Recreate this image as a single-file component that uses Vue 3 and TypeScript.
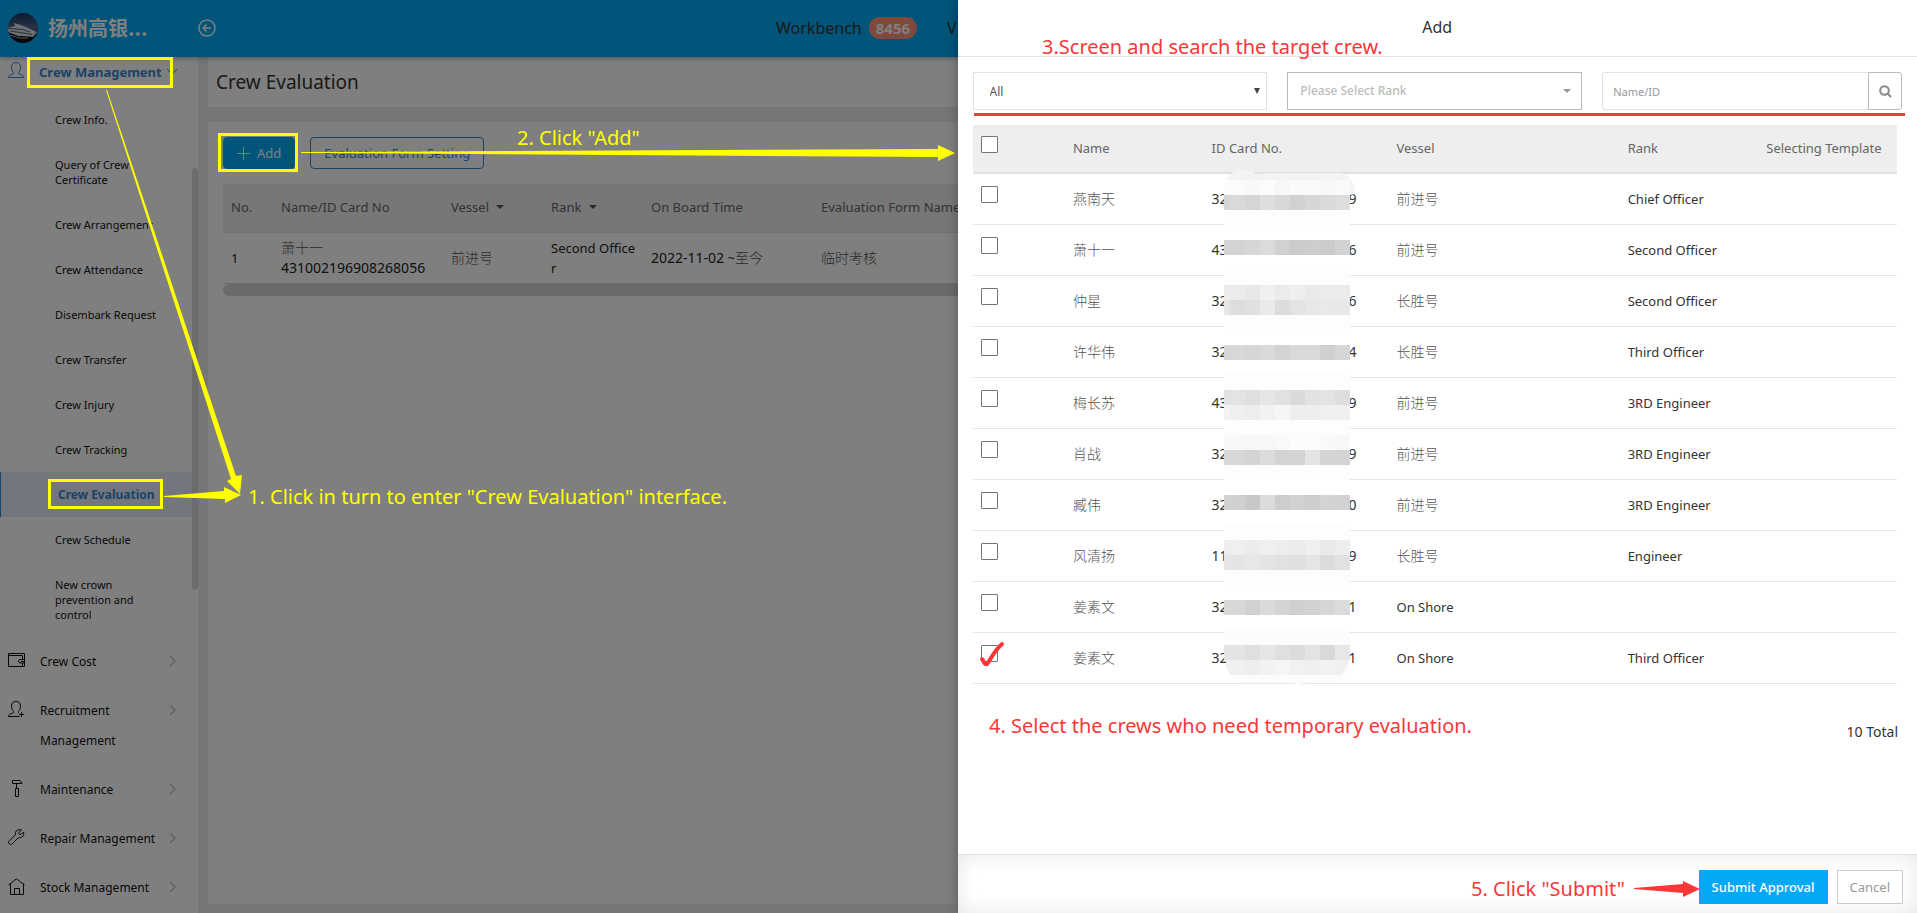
<script setup lang="ts">
import { ref } from 'vue'

interface Band { y: number; shades: string[]; round?: boolean }
interface Crew {
  name: string
  head: string
  tail: string
  vessel: string
  rank: string
  bands: Band[]
}

const subItems = [
  'Crew Info.', 'Query of Crew Certificate', 'Crew Arrangement', 'Crew Attendance',
  'Disembark Request', 'Crew Transfer', 'Crew Injury', 'Crew Tracking',
  'Crew Evaluation', 'Crew Schedule', 'New crown prevention and control'
]
const activeItem = 'Crew Evaluation'

const menuItems = [
  { label: 'Crew Cost', icon: 'wallet' },
  { label: 'Recruitment Management', icon: 'recruit' },
  { label: 'Maintenance', icon: 'hammer' },
  { label: 'Repair Management', icon: 'wrench' },
  { label: 'Stock Management', icon: 'house' }
]

const row = (s: string) => s.split(' ').map((c) => '#' + c + c + c)
const flat = (c: string) => Array<string>(9).fill('#' + c + c + c)

const crews: Crew[] = [
  { name: '燕南天', head: '32', tail: '9', vessel: '前进号', rank: 'Chief Officer', bands: [
    { y: 6, shades: row('fc fb f8 fb f7 fa fa f7 f9') }, { y: 21, shades: row('d5 d9 d5 de d8 d1 d6 da dd') }, { y: 36, shades: flat('fd') }] },
  { name: '萧十一', head: '43', tail: '6', vessel: '前进号', rank: 'Second Officer', bands: [
    { y: 15, shades: row('d3 d3 d6 db d1 cb cd cb d2') }, { y: 45, shades: flat('fd') }] },
  { name: '仲星', head: '32', tail: '6', vessel: '长胜号', rank: 'Second Officer', bands: [
    { y: 9, shades: row('ec ec e8 f0 eb ee ea ec ec') }, { y: 24, shades: row('e5 dd e0 ea dc e3 e7 e9 e8') }, { y: 39, shades: flat('fd') }] },
  { name: '许华伟', head: '32', tail: '4', vessel: '长胜号', rank: 'Third Officer', bands: [
    { y: 18, shades: row('d6 d8 d6 da d3 d9 d9 d0 d6') }, { y: 45, shades: flat('fd') }] },
  { name: '梅长苏', head: '43', tail: '9', vessel: '前进号', rank: '3RD Engineer', bands: [
    { y: 12, shades: row('e1 e3 df e6 e1 da e2 e3 de') }, { y: 27, shades: row('f2 ef ed f2 f6 ee ee ef f0') }, { y: 42, shades: flat('fd') }] },
  { name: '肖战', head: '32', tail: '9', vessel: '前进号', rank: '3RD Engineer', bands: [
    { y: 6, shades: row('f8 f8 f7 f7 f9 fc fc f9 f7') }, { y: 21, shades: row('d9 d7 d4 dc d3 d3 e4 d4 d4') }, { y: 36, shades: flat('fd') }] },
  { name: '臧伟', head: '32', tail: '0', vessel: '前进号', rank: '3RD Engineer', bands: [
    { y: 15, shades: row('d2 d0 c8 dc cd d1 ce d3 d2') }, { y: 45, shades: flat('fd') }] },
  { name: '风清扬', head: '11', tail: '9', vessel: '长胜号', rank: 'Engineer', bands: [
    { y: 9, shades: row('ee ef ec ef ed eb ef ea ed') }, { y: 24, shades: row('e6 e4 e7 e4 e1 df e5 db e1') }, { y: 39, shades: flat('fd') }] },
  { name: '姜素文', head: '32', tail: '1', vessel: 'On Shore', rank: '', bands: [
    { y: 18, shades: row('d9 d8 d1 da d4 cf d2 d6 db') }, { y: 48, shades: flat('fd') }] },
  { name: '姜素文', head: '32', tail: '1', vessel: 'On Shore', rank: 'Third Officer', bands: [
    { y: 12, shades: row('e5 e4 df e6 df dc e3 d9 e7') }, { y: 27, shades: row('f0 f0 ee f2 f5 f1 ef f2 f0'), round: true }] }
]

const scope = ref('All')
const rank = ref('Please Select Rank')
const keyword = ref('')
const picked = ref<number[]>([])
</script>

<template>
  <div class="page">
    <header class="topbar">
      <svg class="logo" viewBox="0 0 30 30" aria-hidden="true">
        <defs>
          <clipPath id="logoClip"><circle cx="15" cy="15" r="15" /></clipPath>
          <linearGradient id="logoSky" x1="0" y1="0" x2="0" y2="1">
            <stop offset="0" stop-color="#1c355f" />
            <stop offset="0.5" stop-color="#4c6790" />
            <stop offset="0.72" stop-color="#20283c" />
            <stop offset="1" stop-color="#07090f" />
          </linearGradient>
        </defs>
        <g clip-path="url(#logoClip)">
          <rect width="30" height="30" fill="url(#logoSky)" />
          <path d="M0 15 L7 13 L6 10 L13 12 L18 14 L29 19 L25 24 L10 23 L0 19Z" fill="#d9dce2" />
          <path d="M0 15.500L15 16.500L22 19M2 18L15 20L24 21.500" fill="none" stroke="#54617a" stroke-width="1" />
          <path d="M0 20L10 23L25 24L21 30H6Z" fill="#0d1018" />
          <path d="M1 22L12 25L20 25" fill="none" stroke="#a9adb5" stroke-width="1" />
        </g>
      </svg>
      <strong class="brand">扬州高银...</strong>
      <button class="back" type="button" aria-label="Collapse menu">
        <svg viewBox="0 0 18 18"><circle cx="9" cy="9" r="8" /><path d="M13 9H5M8.500 5.500L5 9L8.500 12.500" /></svg>
      </button>
      <nav class="topnav">
        <a href="#workbench">Workbench <span class="count">8456</span></a>
        <a href="#v">V</a>
      </nav>
    </header>

    <div class="body">
      <aside class="sidebar">
        <a class="menu current" href="#crew">
          <svg class="mi" viewBox="0 0 16 16"><path d="M5.500 10.500C4 9 3.500 7 3.500 5C3.500 2 5.500.5 8 .5S12.500 2 12.500 5C12.500 7 12 9 10.500 10.500C10 12 11 12 13.500 13C15 13.500 15.500 14 15.500 15.500H.5C.5 14 1 13.500 2.500 13C5 12 6 12 5.500 10.500Z" /></svg>
          <span>Crew Management</span>
          <svg class="down" viewBox="0 0 12 7"><path d="M1 1L6 6L11 1" /></svg>
        </a>
        <a v-for="item in subItems" :key="item" class="sub" :class="{ active: item === activeItem }" href="#sub">{{ item }}</a>
        <a v-for="item in menuItems" :key="item.label" class="menu" href="#menu">
          <svg class="mi" viewBox="0 0 17 17">
            <template v-if="item.icon === 'wallet'">
              <path d="M.5 1.500H16.500V14.500H.5ZM1 3.500H14.500V7.500M14.500 11V14.500M16.500 7.500H11.500L10.500 9L11.500 11H16.500M13 9.500H16" />
            </template>
            <template v-else-if="item.icon === 'recruit'">
              <path d="M10.500 12C10.500 11 10 11 10.500 10.500C12 9 12.500 7 12.500 5C12.500 2 10.500.5 8 .5S3.500 2 3.500 5C3.500 7 4 9 5.500 10.500C6 12 5 12 2.500 13C1 13.500.5 14 .5 15.500H11.500M13.500 11V16M11 13.500H16" />
            </template>
            <template v-else-if="item.icon === 'hammer'">
              <path d="M4.500.5H12L14 3.500H4.500ZM8.500 3.500V8M7.500 8.500H10.500V16.500H7.500Z" />
            </template>
            <template v-else-if="item.icon === 'wrench'">
              <path d="M13.500 1C11 0 8 1 7.500 3.500C7.300 4.500 7.500 5.500 7.300 6L1.200 12C-.5 14 2 16.800 4 15L10 9C11 8.800 12.500 9 14 8C15.800 6.800 16 4.500 15.500 3L13 5.500L11 5L10.800 3.500Z" />
            </template>
            <template v-else>
              <path d="M.5 7L8.500.8L16.500 7M2.500 5.500V16.500H15.500V5.500M6.500 16.500V10.500H11.500V16.500" />
            </template>
          </svg>
          <span>{{ item.label }}</span>
          <svg class="right" viewBox="0 0 7 12"><path d="M1 1L6 6L1 11" /></svg>
        </a>
        <i class="thumb"></i>
      </aside>

      <main class="content">
        <section class="titlebar"><h1>Crew Evaluation</h1></section>
        <section class="panel">
          <div class="actions">
            <button class="add" type="button">
              <svg viewBox="0 0 13 13"><path d="M6.500 0V13M0 6.500H13" /></svg>Add
            </button>
            <button class="outline" type="button">Evaluation Form Setting</button>
          </div>
          <div class="scroller">
            <table class="evals">
              <colgroup><col class="c50" /><col class="c170" /><col class="c100" /><col class="c100" /><col class="c170" /><col /></colgroup>
              <thead>
                <tr>
                  <th>No.</th>
                  <th>Name/ID Card No</th>
                  <th>Vessel <i class="caret"></i></th>
                  <th>Rank <i class="caret"></i></th>
                  <th>On Board Time</th>
                  <th>Evaluation Form Name</th>
                </tr>
              </thead>
              <tbody>
                <tr>
                  <td>1</td>
                  <td><span class="han">萧十一</span><br /><span class="num">431002196908268056</span></td>
                  <td class="han">前进号</td>
                  <td class="break">Second Officer</td>
                  <td><span class="num">2022-11-02</span> ~<span class="han">至今</span></td>
                  <td class="han">临时考核</td>
                </tr>
              </tbody>
            </table>
            <div class="hbar"></div>
          </div>
        </section>
      </main>
    </div>

    <div class="mask"></div>

    <section class="drawer" role="dialog" aria-label="Add">
      <header class="drawer-head"><h2>Add</h2></header>
      <div class="filters">
        <div class="pick light">
          <select v-model="scope" aria-label="Scope"><option>All</option></select>
          <svg viewBox="0 0 6 6"><path d="M0 0H6L3 6Z" /></svg>
        </div>
        <div class="pick">
          <select v-model="rank" aria-label="Rank"><option>Please Select Rank</option></select>
          <svg class="wide" viewBox="0 0 8 4"><path d="M0 0H8L4 4Z" /></svg>
        </div>
        <form class="search" @submit.prevent>
          <input v-model="keyword" type="text" placeholder="Name/ID" aria-label="Name/ID" />
          <button type="submit" aria-label="Search">
            <svg viewBox="0 0 13 13"><circle cx="5.500" cy="5.500" r="4.300" /><path d="M8.600 8.600L12 12" /></svg>
          </button>
        </form>
      </div>

      <table class="crews">
        <colgroup><col class="p10" /><col class="p15" /><col class="p20" /><col class="p25" /><col class="p15" /><col class="p15" /></colgroup>
        <thead>
          <tr>
            <th class="tick"><input type="checkbox" aria-label="Select all" /></th>
            <th>Name</th><th>ID Card No.</th><th>Vessel</th><th>Rank</th><th>Selecting Template</th>
          </tr>
        </thead>
        <tbody>
          <tr v-for="(c, i) in crews" :key="i">
            <td class="tick"><input v-model="picked" type="checkbox" :value="i" :aria-label="'Select ' + c.name" /></td>
            <td class="han">{{ c.name }}</td>
            <td class="idcell">
              <span class="idtext"><span>{{ c.head }}</span><span>{{ c.tail }}</span></span>
              <svg class="mosaic" width="132" height="51" aria-hidden="true">
                <path v-if="i === 0" d="M0 21V14C2 4 9 -5 18 -5C24 -5 28 -3 31 0L46 -1H116C126 1 131 9 131 20L126 21Z" fill="#f3f3f3" />
                <path v-if="i === 9" d="M2 -2H126V27C126 36 122 46 114 49L78 50L76 54L70 50H18C8 46 2 40 2 27Z" fill="#fcfcfc" />
                <template v-for="b in c.bands" :key="b.y">
                  <template v-for="(s, k) in b.shades" :key="k">
                    <path v-if="b.round && k === 0" :d="'M2 ' + b.y + 'H6V' + (b.y + 14) + 'C3 ' + (b.y + 11) + ' 2 ' + (b.y + 6) + ' 2 ' + b.y" :fill="s" />
                    <path v-else-if="b.round && k === 8" :d="'M111 ' + b.y + 'H125C123 ' + (b.y + 7) + ' 120 ' + (b.y + 13) + ' 116 ' + (b.y + 15) + 'H111Z'" :fill="s" />
                    <rect v-else :x="k === 0 ? 0 : k * 15 - 9" :y="b.y" :width="k === 0 ? 6 : 15" height="15" :fill="s" />
                  </template>
                </template>
              </svg>
            </td>
            <td :class="{ han: c.vessel !== 'On Shore' }">{{ c.vessel }}</td>
            <td>{{ c.rank }}</td>
            <td></td>
          </tr>
        </tbody>
      </table>
      <p class="total">10 Total</p>

      <footer class="drawer-foot">
        <button class="submit" type="button">Submit Approval</button>
        <button class="cancel" type="button">Cancel</button>
      </footer>
    </section>

    <svg class="notes" aria-label="Guide">
      <g class="y-box">
        <rect x="28.500" y="58.500" width="143" height="28" />
        <rect x="219.500" y="134.500" width="77" height="36" />
        <rect x="49.500" y="480.500" width="112" height="27" />
      </g>
      <g class="y-fill">
        <path d="M106 90L107 90L236 476L242 475L240 494L227 481L231 479Z" />
        <path d="M164 496L224 491V487L241 495L225 503V499L164 497Z" />
        <path d="M301 152L938 149V145L955 153L938 161V157L301 153Z" />
        <text x="248" y="504">1. Click in turn to enter "Crew Evaluation" interface.</text>
        <text x="517" y="145">2. Click "Add"</text>
      </g>
      <g class="r-fill">
        <rect x="974" y="113" width="931" height="3" />
        <path d="M1634 888L1683 884V881L1700 889L1683 897V893L1634 889Z" />
        <text x="1042" y="54">3.Screen and search the target crew.</text>
        <text x="989" y="733">4. Select the crews who need temporary evaluation.</text>
        <text x="1471" y="896">5. Click "Submit"</text>
      </g>
      <path class="r-tick" d="M982 659C984 661 984 665 987 664C990 661 993 652 1002 644" />
    </svg>
  </div>
</template>

<style>
html, body { margin: 0; height: 100%; }
#app { height: 100%; }
</style>

<style scoped>
.page {
  position: relative; height: 100vh; overflow: hidden; display: flex; flex-direction: column;
  background: #eaecf0; color: #333; font: 13px/20px "Noto Sans", "Noto Sans CJK SC", sans-serif;
}
.page * { box-sizing: border-box; }
a { color: inherit; text-decoration: none; }
button, select, input { font-family: inherit; margin: 0; }
h1, h2, p { margin: 0; font-weight: 400; }

.topbar {
  flex: none; height: 57px; display: flex; align-items: center; padding: 0 0 2px 8px;
  background: #03a9f4; box-shadow: 0 1px 5px rgba(0, 0, 0, .35); z-index: 1;
}
.logo { width: 30px; height: 30px; }
.brand { margin-left: 10px; width: 140px; color: #fff; font-size: 20px; line-height: 30px; font-family: "Noto Sans CJK SC", sans-serif; }
.back { width: 18px; height: 18px; margin-left: 10px; padding: 0; border: 0; background: none; }
.back svg { display: block; width: 18px; fill: none; stroke: #fff; stroke-width: 1.5; }
.topnav { display: flex; align-items: center; gap: 30px; margin-left: 560px; font-size: 16px; color: #333; }
.topnav a { display: flex; align-items: center; gap: 7px; }
.count { padding: 0 7px; border-radius: 11px; background: #ff9478; color: #fff; font-size: 15px; line-height: 22px; font-weight: 700; }

.body { flex: 1; min-height: 0; display: flex; gap: 10px; }
.sidebar { position: relative; flex: none; width: 198px; overflow: hidden; background: #fff; color: #111; }
.menu { display: flex; align-items: flex-start; padding: 10px 22px 9px 8px; font-size: 12px; line-height: 30px; }
.menu span { flex: 1; margin-left: 15px; }
.mi { flex: none; width: 17px; height: 17px; margin-top: 5px; fill: none; stroke: currentColor; stroke-width: 1; }
.right { flex: none; width: 7px; height: 12px; margin-top: 8px; fill: none; stroke: #c0c0c0; stroke-width: 1.3; }
.current { padding: 0 20px 10px 8px; color: #3587d0; font-weight: 700; font-size: 13px; }
.current span { white-space: nowrap; }
.current .mi { width: 16px; height: 16px; }
.down { flex: none; width: 12px; height: 7px; margin-top: 11px; fill: none; stroke: currentColor; }
.sub { display: block; padding: 15px 38px 15px 55px; font-size: 11px; line-height: 15px; }
.sub.active { padding-left: 57px; padding-right: 10px; border-left: 1px solid #3587d0; background: #e6eefb; color: #3587d0; font-size: 12px; font-weight: 700; }
.thumb { position: absolute; right: 0; top: 111px; width: 6px; height: 422px; border-radius: 3px; background: #d8d8d8; }

.content { flex: 1; min-width: 0; display: flex; flex-direction: column; gap: 15px; padding-bottom: 9px; }
.titlebar { flex: none; height: 50px; display: flex; align-items: center; padding-left: 8px; background: #fff; }
h1 { font-size: 19px; line-height: 30px; }
.panel { flex: 1; padding: 15px; background: #fff; }
.actions { display: flex; gap: 15px; }
.actions button { height: 32px; padding: 0 13px; border-radius: 4px; font-size: 13px; line-height: 20px; }
.add { display: flex; align-items: center; gap: 7px; border: 1px solid #03a9f4; background: #03a9f4; color: #fff; }
.add svg { width: 13px; height: 13px; stroke: #fff; stroke-width: 1; }
.outline { border: 1px solid #3587d0; background: #fff; color: #3587d0; }
.scroller { margin-top: 15px; overflow: hidden; }
.evals { width: 100%; table-layout: fixed; border-collapse: separate; border-spacing: 0; }
.c50 { width: 50px; } .c100 { width: 100px; } .c170 { width: 170px; }
.evals th { height: 49px; padding: 0 4px 2px 8px; background: #eee; border-bottom: 1px solid #e2e2e2; text-align: left; font-weight: 400; color: #666; }
.evals td { height: 51px; padding: 0 4px 0 8px; border-bottom: 1px solid #ddd; color: #222; }
.break { word-break: break-all; }
.num { font-size: 14px; }
.caret { display: inline-block; margin-left: 4px; vertical-align: 3px; border: 4px solid transparent; border-top-color: #555; border-bottom: 0; }
.hbar { height: 12px; border-radius: 6px 0 0 6px; background: #d6d6d6; }
.han, .evals .han { font-size: 14px; font-weight: 300; color: #555; }

.mask { position: absolute; inset: 0; background: rgba(0, 0, 0, .5); z-index: 2; }

.drawer {
  position: absolute; top: 0; right: 0; bottom: 0; width: calc(50% + 1px); z-index: 3;
  display: flex; flex-direction: column; background: #fff; box-shadow: 0 0 12px rgba(0, 0, 0, .3);
}
.drawer-head { flex: none; height: 57px; padding-top: 12px; border-bottom: 1px solid #e2e2e2; text-align: center; }
h2 { font-size: 16px; line-height: 30px; }
.filters { display: grid; grid-template-columns: 295fr 295fr 300fr; gap: 20px; padding: 15px; }
.pick { position: relative; display: flex; }
.pick select { flex: 1; height: 38px; padding: 0 12px 2px; border: 1px solid #bbb; border-radius: 0; background: #fff; appearance: none; font-size: 12px; font-weight: 500; color: #bbb; }
.pick.light select { padding: 0 16px; border-color: #e2e2e2; color: #555; font-weight: 400; }
.pick svg { position: absolute; right: 7px; top: 16px; width: 6px; height: 6px; fill: #444; }
.pick .wide { right: 11px; top: 17px; width: 8px; height: 4px; fill: #999; }
.search { display: flex; }
.search input { flex: 1; min-width: 0; height: 38px; padding: 0 10px; border: 1px solid #e2e2e2; border-right: 0; border-radius: 3px 0 0 3px; font-size: 11px; }
.search input::placeholder { color: #999; }
.search button { width: 34px; padding: 0; border: 1px solid #bbb; border-radius: 0 3px 3px 0; background: #fff; }
.search svg { display: block; width: 13px; height: 13px; margin: 0 auto; fill: none; stroke: #888; stroke-width: 2; }

.crews { margin: 0 20px 0 15px; table-layout: fixed; border-collapse: separate; border-spacing: 0; }
.p10 { width: 10%; } .p15 { width: 15%; } .p20 { width: 20%; } .p25 { width: 25%; }
.crews th { height: 49px; padding: 0 8px 2px; background: #eee; border-bottom: 2px solid #dee2e6; text-align: left; font-weight: 400; color: #666; }
.crews td { height: 51px; padding: 0 8px; border-bottom: 1px solid #e2e6ea; }
.crews .han { color: #555; }
.crews .tick { padding-top: 12px; vertical-align: top; }
.crews th.tick { padding-top: 11px; }
.tick input { display: block; width: 17px; height: 17px; margin: 0; appearance: none; border: 1px solid #6c757d; border-radius: 1px; background: #fff; }
.crews .idcell { position: relative; padding-right: 0; font-size: 14px; }
.idtext { display: flex; justify-content: space-between; width: 145px; }
.mosaic { position: absolute; left: 20px; top: 0; overflow: visible; }
.total { margin: 38px 19px 0; text-align: right; font-size: 14px; }
.drawer-foot {
  flex: none; height: 59px; margin-top: auto; display: flex; justify-content: flex-end; align-items: center; gap: 9px; padding: 6px 14px 0;
  border-top: 1px solid #e0e0e0; box-shadow: inset 0 0 20px rgba(0, 0, 0, .1);
}
.drawer-foot button { height: 34px; padding: 0 12px; font-size: 13px; }
.submit { border: 1px solid #03a9f4; background: #03a9f4; color: #fff; font-weight: 500; }
.cancel { border: 1px solid #ccc; background: #fff; color: #999; }

.notes { position: absolute; inset: 0; width: 100%; height: 100%; z-index: 4; pointer-events: none; font-size: 20px; }
.y-box { fill: none; stroke: #ff0; stroke-width: 3; }
.y-fill { fill: #ff0; }
.r-fill { fill: #fa3737; }
.r-tick { fill: none; stroke: #fa3737; stroke-width: 4; stroke-linecap: round; }
</style>
